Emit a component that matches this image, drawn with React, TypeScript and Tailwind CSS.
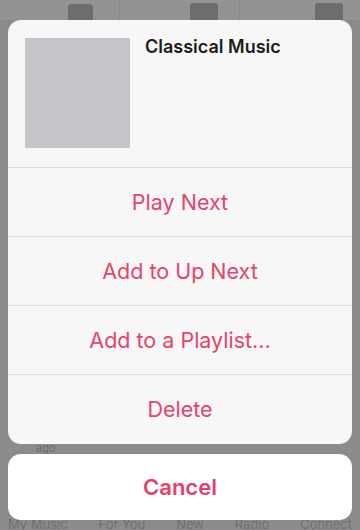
import React from 'react';

const actions = ['Play Next', 'Add to Up Next', 'Add to a Playlist...', 'Delete'];
const tabs = ['My Music', 'For You', 'New', 'Radio', 'Connect'];

const App = () => {
  return (
    <div
      className="relative w-[360px] h-[530px] overflow-hidden bg-[#8b8b8b]"
      style={{ fontFamily: 'Inter, "Liberation Sans", sans-serif' }}
    >
      {/* dimmed app behind the sheet */}
      <div className="absolute inset-0">
        <div className="flex h-[20px] bg-[#939393]">
          <div className="w-[120px] flex items-end pl-[68px] border-r border-[#8a8a8a]">
            <div className="w-[25px] h-[16px] rounded-t-[3px] bg-[#6d6d6d]" />
          </div>
          <div className="w-[120px] flex items-end pl-[70px] border-r border-[#8a8a8a]">
            <div className="w-[28px] h-[17px] rounded-t-[3px] bg-[#6d6d6d]" />
          </div>
          <div className="flex-1 flex items-end pl-[75px]">
            <div className="w-[28px] h-[17px] rounded-t-[3px] bg-[#6d6d6d]" />
          </div>
        </div>
        <div className="absolute left-[36px] top-[440px] text-[11px] text-[#6f6f6f]">ago</div>
        <div className="absolute left-0 right-0 top-[515px] flex justify-between px-[8px] text-[13px] text-[#707070]">
          {tabs.map((t) => (
            <span key={t}>{t}</span>
          ))}
        </div>
      </div>

      {/* action sheet */}
      <div className="relative flex flex-col gap-[10px] px-[8px] pt-[20px]">
        <div className="rounded-[13px] bg-[#f7f7f7] overflow-hidden">
          <div className="flex h-[148px] pl-[17px] pt-[18px] gap-[15px] border-b border-[#dcdcdc]">
            <div className="w-[105px] h-[110px] bg-[#c5c5c9]" />
            <div className="text-[18px] font-semibold text-[#1c1c1c] leading-[20px] -mt-[1px]">Classical Music</div>
          </div>
          {actions.map((a, i) => (
            <div
              key={a}
              className={`h-[69px] flex items-center justify-center text-[21.5px] text-[#e5446b] ${
                i < actions.length - 1 ? 'border-b border-[#dcdcdc]' : ''
              }`}
            >
              {a}
            </div>
          ))}
        </div>
        <div className="h-[66px] rounded-[13px] bg-white flex items-center justify-center text-[22px] font-semibold text-[#e3406a]">
          Cancel
        </div>
      </div>
    </div>
  );
};

export default App;
